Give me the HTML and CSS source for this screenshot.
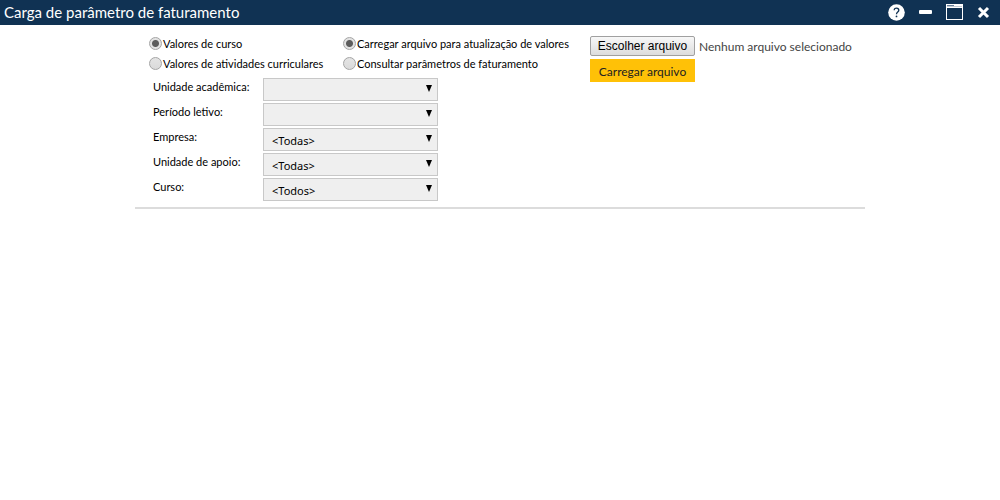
FILE: index.html
```html
<!DOCTYPE html>
<html lang="pt-BR">
<head>
<meta charset="utf-8">
<meta name="viewport" content="width=device-width, initial-scale=1">
<title>Carga de parâmetro de faturamento</title>
<link rel="stylesheet" href="styles.css">
</head>
<body>
<header class="titlebar">
  <h1 class="title">Carga de parâmetro de faturamento</h1>
  <div class="actions">
    <button class="action" type="button" aria-label="Ajuda">
      <svg width="17" height="17" viewBox="0 0 17 17"><circle cx="8.500" cy="8.500" r="8.300" fill="#fff"/><path d="M6.200 6.200C6.200 3.300 10.800 3.600 10.800 6.300C10.800 8.100 8.500 8 8.500 10.200" fill="none" stroke="#103253" stroke-width="1.300"/><circle cx="8.500" cy="12.400" r=".9" fill="#103253"/></svg>
    </button>
    <button class="action" type="button" aria-label="Minimizar">
      <svg width="17" height="17" viewBox="0 0 17 17"><rect x="2" y="6" width="13" height="4" rx="1" fill="#fff"/></svg>
    </button>
    <button class="action" type="button" aria-label="Maximizar">
      <svg width="17" height="17" viewBox="0 0 17 17"><path d="M0 0h17v16H0z" fill="#fff"/><path d="M1 4h15v11H1z" fill="#103253"/><path d="M1 1.500h7" stroke="#68809a"/><path d="M1 2.500h15" stroke="#c3ccd5"/></svg>
    </button>
    <button class="action" type="button" aria-label="Fechar">
      <svg width="17" height="17" viewBox="0 0 17 17"><path d="M4 4l9 9M13 4l-9 9" stroke="#fff" stroke-width="3"/></svg>
    </button>
  </div>
</header>
<main>
  <form class="panel">
    <div class="filters">
      <div class="choices">
        <div class="group">
          <label class="choice"><input class="radio" type="radio" name="tipo" checked>Valores de curso</label>
          <label class="choice"><input class="radio" type="radio" name="tipo">Valores de atividades curriculares</label>
        </div>
        <div class="group">
          <label class="choice"><input class="radio" type="radio" name="operacao" checked>Carregar arquivo para atualização de valores</label>
          <label class="choice"><input class="radio" type="radio" name="operacao">Consultar parâmetros de faturamento</label>
        </div>
      </div>
      <div class="fields">
        <label class="field-label" for="academica">Unidade acadêmica:</label>
        <div class="select-box"><select class="select" id="academica"><option></option></select></div>
        <label class="field-label" for="periodo">Período letivo:</label>
        <div class="select-box"><select class="select" id="periodo"><option></option></select></div>
        <label class="field-label" for="empresa">Empresa:</label>
        <div class="select-box"><select class="select" id="empresa"><option>&lt;Todas&gt;</option></select></div>
        <label class="field-label" for="apoio">Unidade de apoio:</label>
        <div class="select-box"><select class="select" id="apoio"><option>&lt;Todas&gt;</option></select></div>
        <label class="field-label" for="curso">Curso:</label>
        <div class="select-box"><select class="select" id="curso"><option>&lt;Todos&gt;</option></select></div>
      </div>
    </div>
    <div class="upload">
      <div class="file">
        <button class="choose" type="button" aria-describedby="arquivo">Escolher arquivo</button>
        <span class="file-name" id="arquivo">Nenhum arquivo selecionado</span>
      </div>
      <button class="submit" type="button">Carregar arquivo</button>
    </div>
  </form>
</main>
</body>
</html>
```
FILE: styles.css
```css
* {
  box-sizing: border-box;
}

body {
  margin: 0;
  background: #fff;
  color: #000;
  font-family: Lato, "Open Sans", sans-serif;
  font-size: 11px;
}

button,
select {
  font-family: inherit;
}

.titlebar {
  display: flex;
  align-items: center;
  justify-content: space-between;
  height: 25px;
  padding: 0 8px 0 4px;
  background: #103253;
  color: #fff;
}

.title {
  margin: 0;
  padding-bottom: 2px;
  font-size: 15px;
  font-weight: 400;
  line-height: 20px;
}

.actions {
  display: flex;
  gap: 12px;
}

.action {
  display: block;
  padding: 0;
  border: 0;
  background: none;
  line-height: 0;
}

.panel {
  display: flex;
  max-width: 730px;
  margin: 0 auto;
  padding: 8px 0 6px 14px;
  border-bottom: 2px solid #dcdcdc;
}

.filters {
  flex: 0 0 441px;
}

.choices {
  display: grid;
  grid-template-columns: 194px 1fr;
}

.choice {
  display: flex;
  align-items: center;
  gap: 1px;
  height: 20px;
  white-space: nowrap;
}

.radio {
  appearance: none;
  width: 13px;
  height: 13px;
  margin: 0;
  border: 1px solid #a5a5a5;
  border-radius: 50%;
  background: linear-gradient(#e4e4e4, #dadada);
}

.radio:checked {
  background: radial-gradient(circle, #5c5c5c 3px, #e2e2e2 4px);
}

.fields {
  display: grid;
  grid-template-columns: 110px 175px;
  row-gap: 2px;
  padding: 5px 0 0 4px;
}

.field-label {
  line-height: 18px;
}

.select-box {
  position: relative;
}

.select-box::after {
  content: "";
  position: absolute;
  top: 7px;
  right: 6px;
  border: 3px solid transparent;
  border-top: 7px solid #000;
  border-bottom: 0;
  pointer-events: none;
}

.select {
  appearance: none;
  display: block;
  width: 100%;
  height: 23px;
  padding: 1px 20px 0 8px;
  border: 1px solid #c8c8c8;
  border-radius: 0;
  background: #efefef;
  color: #000;
  font-family: "Noto Sans", sans-serif;
  font-size: 11px;
}

.upload {
  padding-top: 3px;
}

.file {
  display: flex;
  align-items: center;
  gap: 4px;
  white-space: nowrap;
}

.choose {
  width: 105px;
  height: 20px;
  padding: 0;
  border: 1px solid #a0a0a0;
  border-radius: 2px;
  background: linear-gradient(#f8f8f8, #dddddd);
  color: #000;
  font-family: "Liberation Sans", Arial, sans-serif;
  font-size: 12px;
}

.file-name {
  color: #444;
  font-size: 12px;
}

.submit {
  display: block;
  width: 105px;
  height: 23px;
  margin-top: 3px;
  padding: 2px 0 0;
  border: 0;
  background: #ffc107;
  color: #222;
  font-size: 12px;
}
```
